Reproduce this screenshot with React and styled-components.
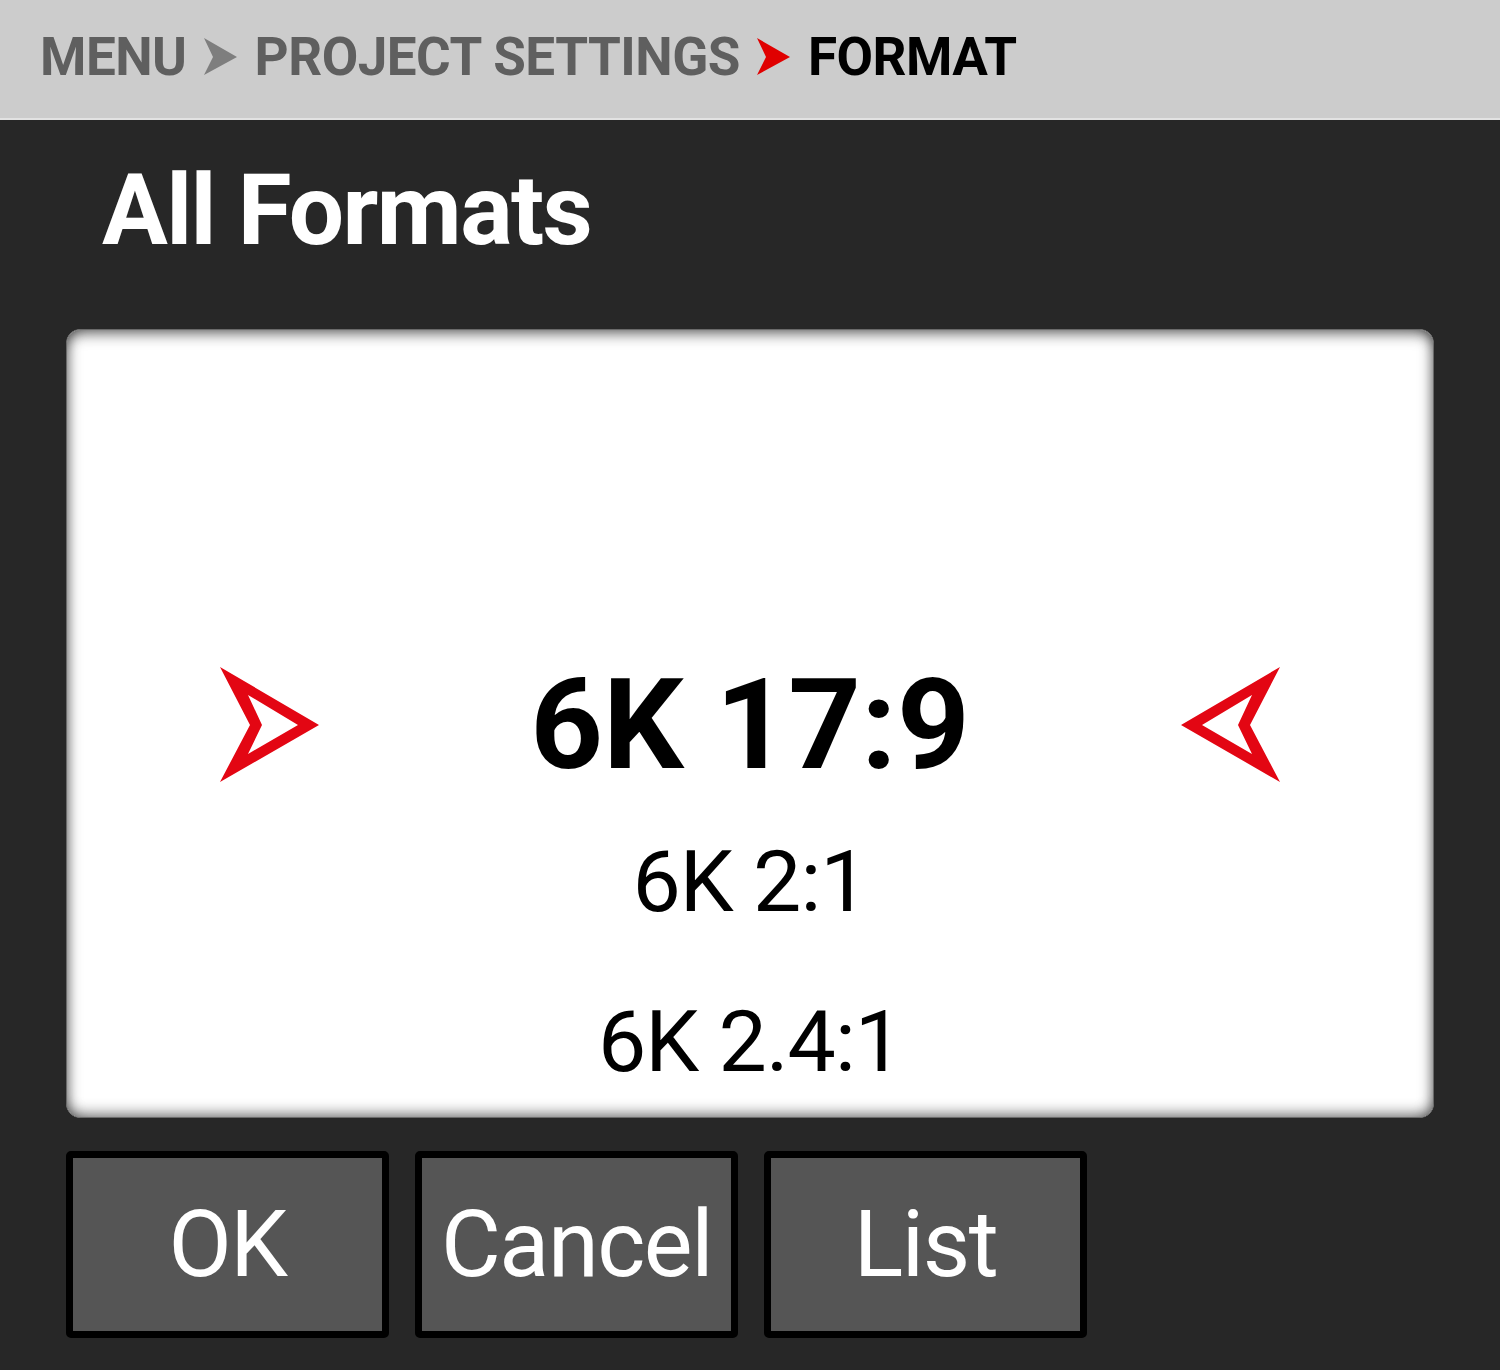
import React from "react";
import styled, { createGlobalStyle } from "styled-components";

const GlobalStyle = createGlobalStyle`
  html, body {
    margin: 0;
    padding: 0;
    background: #272727;
  }
  body {
    font-family: Roboto, "Liberation Sans", sans-serif;
  }
`;

const Screen = styled.div`
  width: 1500px;
  height: 1370px;
  background: #272727;
  display: flex;
  flex-direction: column;
  overflow: hidden;
`;

const Header = styled.div`
  box-sizing: border-box;
  height: 120px;
  flex-shrink: 0;
  background: #cccccc;
  border-bottom: 2px solid #e2e2e2;
  display: flex;
  align-items: center;
  gap: 17px;
  padding: 0 0 4px 40px;
`;

const Crumb = styled.span`
  font-size: 53px;
  line-height: 1;
  font-weight: 700;
  letter-spacing: -0.5px;
  color: ${props => (props.active ? "#000000" : "#5f5f5f")};
`;

const Body = styled.div`
  display: flex;
  flex-direction: column;
  padding: 42px 66px 0;
`;

const Title = styled.h1`
  margin: 0 0 0 36px;
  font-size: 98px;
  line-height: 1;
  font-weight: 700;
  color: #ffffff;
  letter-spacing: -1.6px;
`;

const Panel = styled.div`
  box-sizing: border-box;
  margin-top: 69px;
  height: 789px;
  background: #ffffff;
  border-radius: 14px;
  border: 1px solid #6a6a6a;
  box-shadow: inset 0 10px 14px -6px rgba(0, 0, 0, 0.55),
    inset 0 -10px 14px -6px rgba(0, 0, 0, 0.45),
    inset 10px 0 14px -8px rgba(0, 0, 0, 0.4),
    inset -10px 0 14px -8px rgba(0, 0, 0, 0.4);
  display: flex;
  flex-direction: column;
  align-items: stretch;
  padding-top: 331px;
`;

const SelectedRow = styled.div`
  display: flex;
  align-items: center;
  justify-content: space-between;
  padding: 0 153px;
`;

const Selected = styled.div`
  font-size: 127px;
  line-height: 1;
  font-weight: 700;
  color: #000000;
`;

const Option = styled.div`
  text-align: center;
  font-size: 86px;
  line-height: 1;
  font-weight: 400;
  letter-spacing: -1px;
  color: #000000;
  margin-top: ${props => props.gap}px;
`;

const ButtonRow = styled.div`
  display: flex;
  gap: 26px;
  margin-top: 33px;
`;

const Button = styled.button`
  box-sizing: border-box;
  width: 323px;
  height: 187px;
  background: #555555;
  border: 7px solid #000000;
  border-radius: 5px;
  color: #ffffff;
  font-family: Roboto, "Liberation Sans", sans-serif;
  font-size: 92px;
  font-weight: 400;
  letter-spacing: -1.5px;
  line-height: 1;
  padding: 0;
  display: flex;
  align-items: center;
  justify-content: center;
`;

const Chevron = ({ color }) => (
  <svg width="34" height="38" viewBox="0 0 34 38">
    <path d="M0 0 L33 19 L0 37 L9 19 Z" fill={color} />
  </svg>
);

const Pointer = ({ flip }) => (
  <svg
    width="100"
    height="116"
    viewBox="0 0 100 116"
    style={flip ? { transform: "scaleX(-1)" } : undefined}
  >
    <path
      d="M0 0 L99 58 L0 115 L30 58 Z M28 28 L78 58 L28 87 L42 58 Z"
      fill="#e30613"
      fillRule="evenodd"
    />
  </svg>
);

export default function App() {
  return (
    <Screen>
      <GlobalStyle />
      <Header>
        <Crumb>MENU</Crumb>
        <Chevron color="#7e7e7e" />
        <Crumb>PROJECT SETTINGS</Crumb>
        <Chevron color="#e00000" />
        <Crumb active>FORMAT</Crumb>
      </Header>
      <Body>
        <Title>All Formats</Title>
        <Panel>
          <SelectedRow>
            <Pointer />
            <Selected>6K 17:9</Selected>
            <Pointer flip />
          </SelectedRow>
          <Option gap={51}>6K 2:1</Option>
          <Option gap={74}>6K 2.4:1</Option>
        </Panel>
        <ButtonRow>
          <Button>OK</Button>
          <Button>Cancel</Button>
          <Button>List</Button>
        </ButtonRow>
      </Body>
    </Screen>
  );
}
